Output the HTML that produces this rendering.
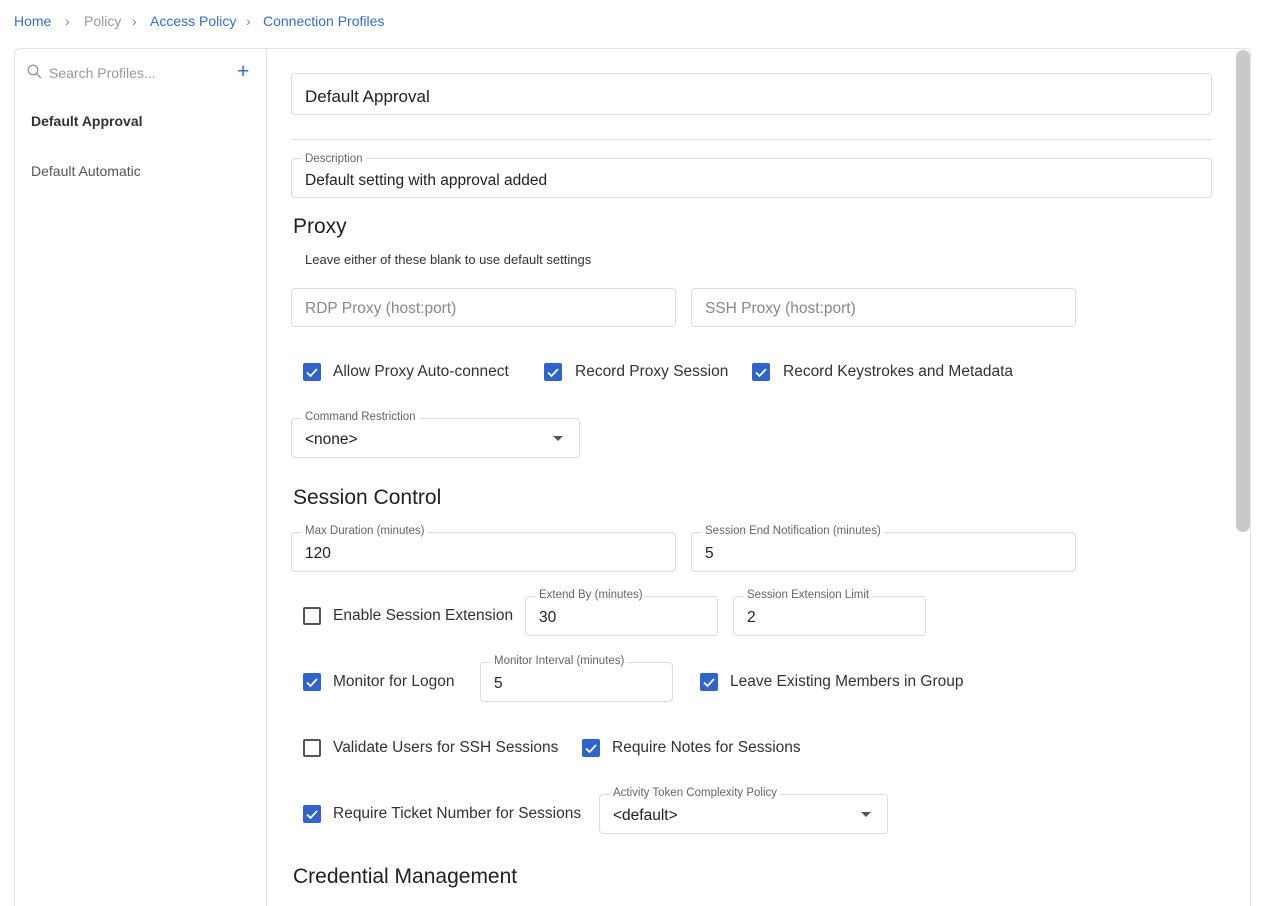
<!DOCTYPE html>
<html><head><meta charset="utf-8"><style>
*{box-sizing:border-box;margin:0;padding:0}
html,body{width:1267px;height:906px;overflow:hidden}
body{background:#fff;font-family:"Liberation Sans",sans-serif;color:#222;position:relative}
.a{position:absolute;white-space:nowrap}
.bc{top:13px;font-size:14px;color:#2f6fd6}
.card{left:14px;top:48px;width:1237px;height:900px;border:1px solid #e3e3e3;border-radius:6px}
.div{left:266px;top:49px;width:1px;height:860px;background:#e3e3e3}
.f{position:absolute;border:1px solid #dcdcdc;border-radius:4px;background:#fff}
.f .l{position:absolute;left:10px;top:-8px;background:#fff;padding:0 3px;font-size:11.5px;color:#666}
.f .v{position:absolute;left:13px;font-size:15.5px;color:#222}
.f .p{position:absolute;left:13px;top:11px;font-size:15.5px;color:#888}
.cb{position:absolute;width:18px;height:18px;border-radius:2px;background:#2f63d0}
.cb svg{position:absolute;left:2px;top:2px}
.cu{position:absolute;width:18px;height:18px;border-radius:2px;border:2px solid #555;background:#fff}
.t{position:absolute;font-size:15.5px;color:#333;white-space:nowrap}
.h{position:absolute;font-size:21px;color:#222;white-space:nowrap}
.arr{position:absolute;width:0;height:0;border-left:5px solid transparent;border-right:5px solid transparent;border-top:5px solid #555}
</style></head><body>
<div class="a bc" style="left:14px">Home</div>
<div class="a bc" style="left:65px;color:#888">›</div>
<div class="a bc" style="left:84px;color:#999">Policy</div>
<div class="a bc" style="left:132px;color:#888">›</div>
<div class="a bc" style="left:150px">Access Policy</div>
<div class="a bc" style="left:246px;color:#888">›</div>
<div class="a bc" style="left:263px">Connection Profiles</div>

<div class="a card"></div>
<div class="a div"></div>
<div class="a" style="left:1236px;top:50px;width:14px;height:482px;background:#c9c9c9;border-radius:7px"></div>

<svg class="a" style="left:27px;top:64px" width="15" height="15" viewBox="0 0 15 15"><circle cx="6" cy="6" r="4.8" fill="none" stroke="#999" stroke-width="1.3"/><path d="M9.5 9.5L14 14" stroke="#999" stroke-width="1.3"/></svg>
<div class="a" style="left:49px;top:65px;font-size:14px;color:#999">Search Profiles...</div>
<div class="a" style="left:237px;top:60px;font-size:21px;color:#2f6fd6">+</div>
<div class="a" style="left:31px;top:113px;font-size:14px;font-weight:bold;color:#333">Default Approval</div>
<div class="a" style="left:31px;top:163px;font-size:14px;color:#555">Default Automatic</div>

<div class="f" style="left:291px;top:73px;width:921px;height:42px"><div class="v" style="top:13px;font-size:17px">Default Approval</div></div>
<div class="a" style="left:291px;top:139px;width:921px;height:1px;background:#e0e0e0"></div>
<div class="f" style="left:291px;top:158px;width:921px;height:40px"><div class="l" style="top:-6px">Description</div><div class="v" style="top:13px">Default setting with approval added</div></div>

<div class="h" style="left:293px;top:215px">Proxy</div>
<div class="t" style="left:305px;top:252px;font-size:13px;color:#333">Leave either of these blank to use default settings</div>
<div class="f" style="left:291px;top:288px;width:385px;height:39px"><div class="p">RDP Proxy (host:port)</div></div>
<div class="f" style="left:691px;top:288px;width:385px;height:39px"><div class="p">SSH Proxy (host:port)</div></div>

<div class="cb" style="left:303px;top:363px"><svg width="14" height="14"><path d="M2 7.5L5.5 11L12 4" fill="none" stroke="#fff" stroke-width="1.8"/></svg></div>
<div class="t" style="left:333px;top:363px">Allow Proxy Auto-connect</div>
<div class="cb" style="left:544px;top:363px"><svg width="14" height="14"><path d="M2 7.5L5.5 11L12 4" fill="none" stroke="#fff" stroke-width="1.8"/></svg></div>
<div class="t" style="left:575px;top:363px">Record Proxy Session</div>
<div class="cb" style="left:752px;top:363px"><svg width="14" height="14"><path d="M2 7.5L5.5 11L12 4" fill="none" stroke="#fff" stroke-width="1.8"/></svg></div>
<div class="t" style="left:783px;top:363px">Record Keystrokes and Metadata</div>

<div class="f" style="left:291px;top:418px;width:289px;height:40px"><div class="l">Command Restriction</div><div class="v" style="top:12px">&lt;none&gt;</div><div class="arr" style="left:261px;top:17px"></div></div>

<div class="h" style="left:293px;top:486px">Session Control</div>
<div class="f" style="left:291px;top:532px;width:385px;height:40px"><div class="l">Max Duration (minutes)</div><div class="v" style="top:12px">120</div></div>
<div class="f" style="left:691px;top:532px;width:385px;height:40px"><div class="l">Session End Notification (minutes)</div><div class="v" style="top:12px">5</div></div>

<div class="cu" style="left:303px;top:607px"></div>
<div class="t" style="left:333px;top:607px">Enable Session Extension</div>
<div class="f" style="left:525px;top:596px;width:193px;height:40px"><div class="l">Extend By (minutes)</div><div class="v" style="top:12px">30</div></div>
<div class="f" style="left:733px;top:596px;width:193px;height:40px"><div class="l">Session Extension Limit</div><div class="v" style="top:12px">2</div></div>

<div class="cb" style="left:303px;top:673px"><svg width="14" height="14"><path d="M2 7.5L5.5 11L12 4" fill="none" stroke="#fff" stroke-width="1.8"/></svg></div>
<div class="t" style="left:333px;top:673px">Monitor for Logon</div>
<div class="f" style="left:480px;top:662px;width:193px;height:40px"><div class="l">Monitor Interval (minutes)</div><div class="v" style="top:12px">5</div></div>
<div class="cb" style="left:700px;top:673px"><svg width="14" height="14"><path d="M2 7.5L5.5 11L12 4" fill="none" stroke="#fff" stroke-width="1.8"/></svg></div>
<div class="t" style="left:730px;top:673px">Leave Existing Members in Group</div>

<div class="cu" style="left:303px;top:739px"></div>
<div class="t" style="left:333px;top:739px">Validate Users for SSH Sessions</div>
<div class="cb" style="left:582px;top:739px"><svg width="14" height="14"><path d="M2 7.5L5.5 11L12 4" fill="none" stroke="#fff" stroke-width="1.8"/></svg></div>
<div class="t" style="left:612px;top:739px">Require Notes for Sessions</div>

<div class="cb" style="left:303px;top:805px"><svg width="14" height="14"><path d="M2 7.5L5.5 11L12 4" fill="none" stroke="#fff" stroke-width="1.8"/></svg></div>
<div class="t" style="left:333px;top:805px">Require Ticket Number for Sessions</div>
<div class="f" style="left:599px;top:794px;width:289px;height:40px"><div class="l">Activity Token Complexity Policy</div><div class="v" style="top:12px">&lt;default&gt;</div><div class="arr" style="left:261px;top:17px"></div></div>

<div class="h" style="left:293px;top:865px">Credential Management</div>
</body></html>
